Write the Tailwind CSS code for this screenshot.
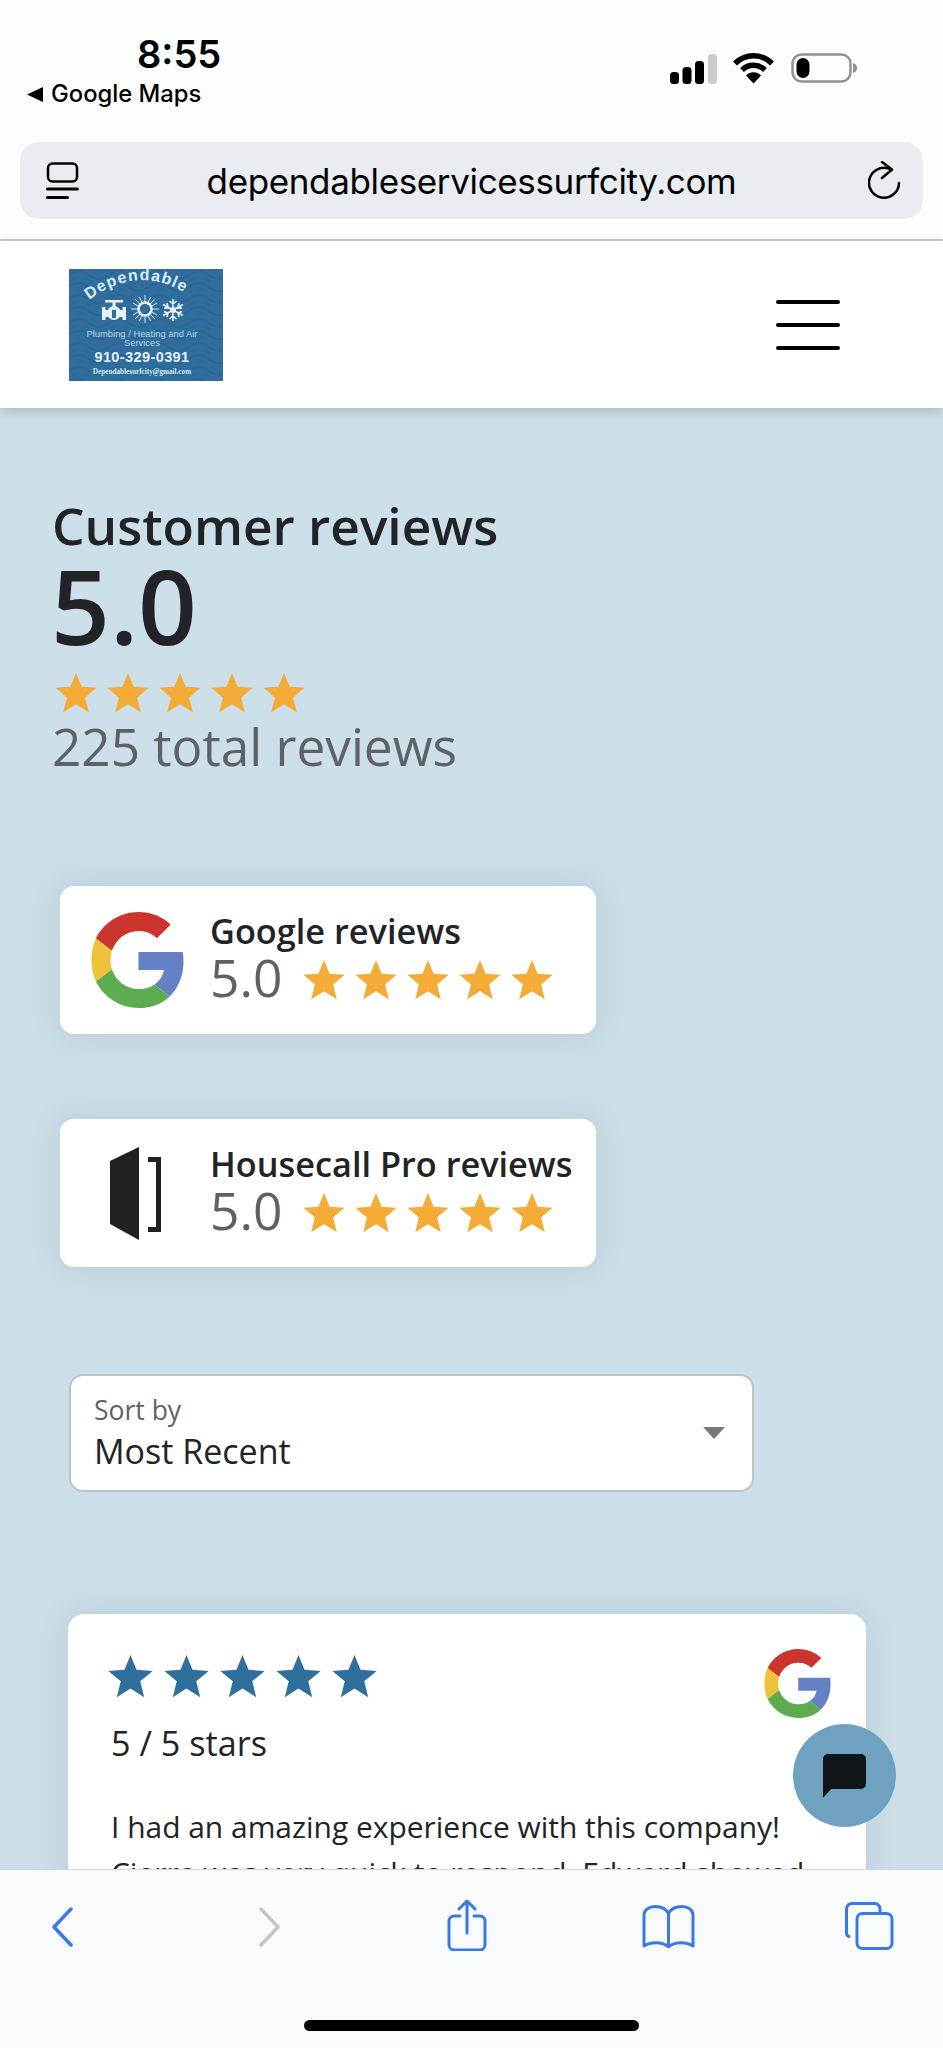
<!DOCTYPE html>
<html lang="en">
<head>
  <meta charset="UTF-8">
  <meta name="viewport" content="width=device-width, initial-scale=1.0">
  <title>Customer reviews - Dependable Services</title>
  <script src="https://cdn.jsdelivr.net/npm/@tailwindcss/browser@4"></script>
</head>
<body class="bg-white">
  <!-- shared icons -->
  <svg class="hidden">
    <symbol id="star" viewBox="0 0 24 24"><polygon points="12,0.5 15.2,8.4 23.8,9 17.2,14.5 19.3,23 12,18.4 4.7,23 6.8,14.5 0.2,9 8.8,8.4"/></symbol>
    <symbol id="google" viewBox="0 0 46 48">
      <path fill="#cb352e" d="M23.5 9.5c3.7 0 6.8 1.3 9.2 3.6l6.9-6.9C35.400 2.400 30 0 23.500 0 14.200 0 6.100 5.400 2.200 13.200l8 6.200C12.100 13.700 17.300 9.500 23.500 9.500z"/>
      <path fill="#6481c5" d="M46 24.500c0-1.600-.1-3.100-.4-4.500H23.500v9h12.700c-.5 3-2.200 5.500-4.700 7.200l7.600 6C43.500 38 46 31.800 46 24.500z"/>
      <path fill="#efc23b" d="M10.200 28.600c-.5-1.400-.7-3-.7-4.600s.3-3.100.7-4.600l-8-6.200C.6 16.500 0 20.100 0 24s.6 7.500 2.200 10.800l8-6.200z"/>
      <path fill="#5dad50" d="M23.500 48c6.400 0 11.800-2.100 15.600-5.800l-7.600-6c-2.100 1.500-4.800 2.300-8 2.300-6.200 0-11.400-4.200-13.300-9.900l-8 6.200C6.100 42.600 14.200 48 23.500 48z"/>
    </symbol>
  </svg>

  <div class="relative w-[943px] h-[2048px] overflow-hidden flex flex-col bg-[#cddfe8] font-['Open_Sans',sans-serif]">

    <!-- status bar + address bar -->
    <div class="h-[241px] shrink-0 bg-[#fcfdfe] border-b-2 border-[#c9cdd0] font-['Inter',sans-serif] text-black">
      <div class="h-[142px] flex justify-between">
        <div class="pl-[27px]">
          <div class="pl-[110px] pt-[30px] text-[38px] leading-[48px] font-semibold">8:55</div>
          <div class="flex items-center gap-[8px] text-[23.800px] leading-[30px] font-medium mt-[1px]">
            <svg class="w-[16px] h-[15px]" viewBox="0 0 16 15"><polygon points="16,0 16,15 0,7.500" fill="#000"/></svg>
            <span>Google Maps</span>
          </div>
        </div>
        <div class="flex items-start gap-[16px] pr-[86px] pt-[53px]">
          <svg class="w-[47px] h-[31px] mt-[1px]" viewBox="0 0 47 31">
            <rect x="0" y="18" width="9" height="12" rx="3.500"/><rect x="12.500" y="13" width="9" height="17" rx="3.500"/><rect x="25" y="7" width="9" height="23" rx="3.500"/><rect x="38" y="0" width="9" height="30" rx="3.500" fill="#c9cccf"/>
          </svg>
          <svg class="w-[41px] h-[31px]" viewBox="0 0 41 31">
            <path d="M2 10.500a26 26 0 0 1 37 0" fill="none" stroke="#000" stroke-width="5.500"/>
            <path d="M9 17a16.500 16.500 0 0 1 23 0" fill="none" stroke="#000" stroke-width="5.500"/>
            <path d="M13 22.500a10.500 10.500 0 0 1 15 0l-7.500 8z"/>
          </svg>
          <svg class="w-[66px] h-[31px] ml-[1px]" viewBox="0 0 66 31">
            <rect x="1.500" y="1.500" width="58" height="27" rx="9" fill="none" stroke="#8f9194" stroke-width="2.500"/>
            <rect x="5.500" y="5" width="13" height="20" rx="6.500"/>
            <path d="M62 10c2.500.5 4 2.500 4 5s-1.500 4.500-4 5z" fill="#8f9194"/>
          </svg>
        </div>
      </div>
      <div class="mx-[20px] h-[77px] rounded-[19px] bg-[#e9edf1] flex items-center justify-between pl-[26px] pr-[22px]">
        <svg class="w-[33px] h-[38px]" viewBox="0 0 33 38" fill="none" stroke="#000" stroke-width="2.500" stroke-linecap="round">
          <rect x="2" y="1.500" width="29" height="18" rx="4.500"/>
          <path d="M1.500 27h30M1.500 35.500h20" stroke-width="3"/>
        </svg>
        <div class="text-[35px] leading-[44px] tracking-[-0.36px] -ml-[4px]">dependableservicessurfcity.com</div>
        <svg class="w-[33px] h-[40px]" viewBox="0 0 33 40" fill="none" stroke="#000" stroke-width="2.500" stroke-linecap="round" stroke-linejoin="round">
          <path d="M31 22A15 15 0 1 1 23 8.500"/>
          <path d="M14 1l10 7.500L14 17"/>
        </svg>
      </div>
    </div>

    <!-- site header -->
    <div class="relative z-10 h-[167px] shrink-0 bg-white shadow-[0_3px_10px_rgba(20,50,70,0.22)] flex items-center justify-between pl-[69px] pr-[103px]">
      <svg class="w-[154px] h-[112px]" viewBox="0 0 154 112">
        <defs>
          <pattern id="waves" width="40" height="12" patternUnits="userSpaceOnUse">
            <path d="M0 6q10-8 20 0t20 0" fill="none" stroke="#28608c" stroke-width="2"/>
          </pattern>
        </defs>
        <rect width="154" height="112" fill="#2f6d9c"/>
        <rect width="154" height="112" fill="url(#waves)" opacity="0.6"/>
        <path id="logoArc" d="M20 31Q72 -8 126 30" fill="none"/>
        <text font-family="'Liberation Sans',sans-serif" font-weight="700" font-size="16" fill="#d8edf6" letter-spacing="1.200"><textPath href="#logoArc">Dependable</textPath></text>
        <g fill="#e6f2f8">
          <rect x="36" y="31" width="18" height="2.500"/><rect x="43.500" y="32" width="3" height="8"/>
          <rect x="33" y="38" width="3.500" height="13"/><rect x="53.500" y="38" width="3.500" height="13"/>
          <rect x="36" y="41" width="18" height="7"/>
          <circle cx="45" cy="44" r="7"/>
          <rect x="43" y="41" width="4" height="8" fill="#2f6d9c"/>
        </g>
        <circle cx="76" cy="40" r="6.500" fill="none" stroke="#e6f2f8" stroke-width="2.500"/>
        <path d="M76 26v7M76 47v7M62 40h7M83 40h7M66 30l5 5M81 45l5 5M86 30l-5 5M71 45l-5 5M70 28l3 5M79 47l3 5M82 28l-3 5M73 47l-3 5M64 34l5 3M83 43l5 3M88 34l-5 3M69 43l-5 3" stroke="#d8ebf4" stroke-width="1"/>
        <circle cx="104" cy="41" r="3" fill="#e6f2f8"/>
        <path d="M104 30v22M94 35.500l20 11M114 35.500l-20 11M100.500 32l3.500 3 3.500-3M100.500 50l3.500-3 3.500 3M95 39.500l4-1.500-1-4M113 42.500l-4 1.500 1 4M113 39.500l-4-1.500 1-4M95 42.500l4 1.500-1 4" fill="none" stroke="#e6f2f8" stroke-width="1.600"/>
        <g text-anchor="middle" font-family="'Liberation Sans',sans-serif">
          <text x="73" y="68" font-size="9.400" fill="#b4d6e8">Plumbing / Heating and Air</text>
          <text x="73" y="77" font-size="9.400" fill="#b4d6e8">Services</text>
          <text x="73" y="93" font-size="14.500" font-weight="700" fill="#e3f1f8" letter-spacing="0.400">910-329-0391</text>
          <text x="73" y="105" font-size="7.200" font-weight="700" fill="#d5e9f3" font-family="'Liberation Serif',serif">Dependablesurfcity@gmail.com</text>
        </g>
      </svg>
      <div class="flex flex-col gap-[19px]">
        <div class="w-[64px] h-[4px] rounded-full bg-black"></div>
        <div class="w-[64px] h-[4px] rounded-full bg-black"></div>
        <div class="w-[64px] h-[4px] rounded-full bg-black"></div>
      </div>
    </div>

    <!-- page content, cut off by the toolbar -->
    <div class="flex-1 min-h-0 overflow-hidden">
      <div class="pl-[52px] pt-[87px]">
        <h1 class="text-[51.400px] leading-[60px] font-semibold text-[#212326]">Customer reviews</h1>
        <div class="text-[103px] leading-[100px] font-semibold text-[#212326] -ml-[1px]">5.0</div>
        <div class="flex gap-[10px] ml-[3px] mt-[17px] fill-[#f4ac37]">
          <svg class="w-[42px] h-[42px]"><use href="#star"/></svg>
          <svg class="w-[42px] h-[42px]"><use href="#star"/></svg>
          <svg class="w-[42px] h-[42px]"><use href="#star"/></svg>
          <svg class="w-[42px] h-[42px]"><use href="#star"/></svg>
          <svg class="w-[42px] h-[42px]"><use href="#star"/></svg>
        </div>
        <div class="text-[51.300px] leading-[60px] text-[#5e6266] mt-[2px]">225 total reviews</div>
      </div>

      <div class="ml-[60px] mt-[110px] w-[536px] h-[148px] rounded-[14px] bg-white shadow-[0_0_32px_rgba(30,70,100,0.13)] flex items-center">
        <svg class="w-[93px] h-[96px] ml-[31px] shrink-0"><use href="#google"/></svg>
        <div class="ml-[26px] -mt-[6px]">
          <div class="text-[34.300px] leading-[44px] font-semibold text-[#212326]">Google reviews</div>
          <div class="flex items-center -mt-[4px]">
            <span class="text-[51.500px] leading-[56px] text-[#5e6266]">5.0</span>
            <div class="flex gap-[10px] ml-[21px] mt-[6px] fill-[#f4ac37]">
              <svg class="w-[42px] h-[42px]"><use href="#star"/></svg>
              <svg class="w-[42px] h-[42px]"><use href="#star"/></svg>
              <svg class="w-[42px] h-[42px]"><use href="#star"/></svg>
              <svg class="w-[42px] h-[42px]"><use href="#star"/></svg>
              <svg class="w-[42px] h-[42px]"><use href="#star"/></svg>
            </div>
          </div>
        </div>
      </div>

      <div class="ml-[60px] mt-[85px] w-[536px] h-[148px] rounded-[14px] bg-white shadow-[0_0_32px_rgba(30,70,100,0.13)] flex items-center">
        <svg class="w-[51px] h-[93px] ml-[50px] mr-[49px] shrink-0" viewBox="0 0 51 93">
          <polygon points="0,14 29,0 29,93 0,77" fill="#212121"/>
          <path d="M38 12.500H48.500V82.500H38" fill="none" stroke="#212121" stroke-width="5"/>
        </svg>
        <div class="-mt-[6px]">
          <div class="text-[34.300px] leading-[44px] font-semibold text-[#212326]">Housecall Pro reviews</div>
          <div class="flex items-center -mt-[4px]">
            <span class="text-[51.500px] leading-[56px] text-[#5e6266]">5.0</span>
            <div class="flex gap-[10px] ml-[21px] mt-[6px] fill-[#f4ac37]">
              <svg class="w-[42px] h-[42px]"><use href="#star"/></svg>
              <svg class="w-[42px] h-[42px]"><use href="#star"/></svg>
              <svg class="w-[42px] h-[42px]"><use href="#star"/></svg>
              <svg class="w-[42px] h-[42px]"><use href="#star"/></svg>
              <svg class="w-[42px] h-[42px]"><use href="#star"/></svg>
            </div>
          </div>
        </div>
      </div>

      <div class="ml-[69px] mt-[107px] w-[685px] h-[118px] rounded-[14px] bg-white border-2 border-[#bfc3c6] flex items-center justify-between pl-[23px] pr-[27px]">
        <div>
          <div class="text-[26.500px] leading-[34px] font-medium text-[#5e6266]">Sort by</div>
          <div class="text-[34px] leading-[46px] text-[#212326] mt-[1px]">Most Recent</div>
        </div>
        <svg class="w-[22px] h-[12px]" viewBox="0 0 22 12"><polygon points="0,0 22,0 11,12" fill="#777a7d"/></svg>
      </div>

      <div class="ml-[68px] mt-[122px] w-[798px] h-[400px] rounded-[16px] bg-white shadow-[0_0_32px_rgba(30,70,100,0.13)] pl-[43px] pr-[35px] pt-[35px]">
        <div class="flex justify-between">
          <div class="flex gap-[11px] -ml-[3px] mt-[5px] fill-[#2e6f9b]">
            <svg class="w-[45px] h-[45px]"><use href="#star"/></svg>
            <svg class="w-[45px] h-[45px]"><use href="#star"/></svg>
            <svg class="w-[45px] h-[45px]"><use href="#star"/></svg>
            <svg class="w-[45px] h-[45px]"><use href="#star"/></svg>
            <svg class="w-[45px] h-[45px]"><use href="#star"/></svg>
          </div>
          <svg class="w-[67px] h-[69px]"><use href="#google"/></svg>
        </div>
        <div class="text-[34.200px] leading-[46px] text-[#212326] mt-[2px]">5 / 5 stars</div>
        <p class="text-[29.950px] leading-[46px] text-[#212326] mt-[38px] w-[740px]">I had an amazing experience with this company! Cierra was very quick to respond. Edward showed</p>
      </div>
    </div>

    <!-- chat bubble -->
    <div class="absolute left-[793px] top-[1724px] w-[103px] h-[103px] rounded-full bg-[#6fa2c0] flex items-center justify-center">
      <svg class="w-[43px] h-[44px]" viewBox="0 0 43 44"><path d="M5 0h33a5 5 0 0 1 5 5v25a5 5 0 0 1-5 5H8L0 44V5a5 5 0 0 1 5-5z" fill="#0f1518"/></svg>
    </div>

    <!-- browser toolbar -->
    <div class="relative z-10 h-[179px] shrink-0 bg-[#f9fafc] border-t border-[#d5d8db]">
      <div class="flex items-start h-[150px] pl-[51px] pt-[30px] stroke-[#3a78e7]">
        <svg class="w-[22px] h-[40px] mt-[7px]" viewBox="0 0 22 40" fill="none" stroke-width="3.500" stroke-linecap="round" stroke-linejoin="round"><path d="M20 2L3 20l17 18"/></svg>
        <svg class="w-[22px] h-[40px] mt-[7px] ml-[186px] stroke-[#c4c6c8]" viewBox="0 0 22 40" fill="none" stroke-width="3.500" stroke-linecap="round" stroke-linejoin="round"><path d="M2 2l17 18L2 38"/></svg>
        <svg class="w-[40px] h-[51px] ml-[166px]" viewBox="0 0 40 51" fill="none" stroke-width="3" stroke-linecap="round" stroke-linejoin="round"><path d="M13 16H7a5 5 0 0 0-5 5v24a5 5 0 0 0 5 5h26a5 5 0 0 0 5-5V21a5 5 0 0 0-5-5h-6M20 33V2M12 9l8-8 8 8"/></svg>
        <svg class="w-[53px] h-[43px] ml-[155px] mt-[5px]" viewBox="0 0 53 43" fill="none" stroke-width="3" stroke-linecap="round" stroke-linejoin="round"><path d="M26.500 9C24 3 19 1.500 13 1.500 7 1.500 2 5 2 10v31c6-4 18-5 24.500 1 6.500-6 18.500-5 24.500-1V10c0-5-5-8.500-11-8.500-6 0-11 1.500-13.500 7.500zM26.500 9v32"/></svg>
        <svg class="w-[49px] h-[48px] ml-[150px] mt-[2px]" viewBox="0 0 49 48" fill="none" stroke-width="3" stroke-linecap="round" stroke-linejoin="round"><path d="M4 34.500c-2-.5-2.500-2-2.500-4V7a5.500 5.500 0 0 1 5.500-5.500h22A5.500 5.500 0 0 1 35 7v4"/><rect x="12" y="11.500" width="35" height="35" rx="5.500"/></svg>
      </div>
      <div class="w-[335px] h-[11px] ml-[304px] rounded-full bg-black"></div>
    </div>
  </div>
</body>
</html>
